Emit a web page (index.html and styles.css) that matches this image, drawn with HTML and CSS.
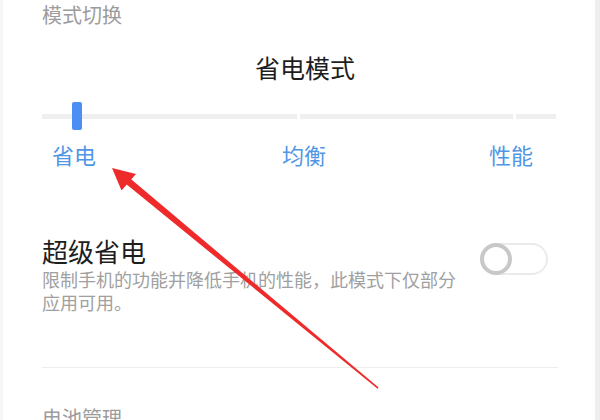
FILE: index.html
```html
<!DOCTYPE html>
<html lang="zh-CN">
<head>
<meta charset="utf-8">
<title>模式切换</title>
<link rel="stylesheet" href="styles.css">
</head>
<body>
<div class="page">
  <div class="content">
    <div class="section-head">模式切换</div>
    <div class="mode-title">省电模式</div>
    <div class="slider">
      <div class="seg seg-a"></div>
      <div class="seg seg-b"></div>
      <div class="seg seg-c"></div>
      <div class="thumb"></div>
    </div>
    <div class="labels">
      <span class="lab lab-1">省电</span>
      <span class="lab lab-2">均衡</span>
      <span class="lab lab-3">性能</span>
    </div>
    <div class="row">
      <div class="row-text">
        <div class="row-title">超级省电</div>
        <div class="row-desc">限制手机的功能并降低手机的性能，此模式下仅部分应用可用。</div>
      </div>
      <div class="toggle"><div class="knob"></div></div>
    </div>
    <div class="divider"></div>
    <div class="section-head next">电池管理</div>
  </div>
  <div class="strip"></div>
  <svg class="arrow" width="600" height="420" viewBox="0 0 600 420">
    <polygon points="112,168 121.5,190.5 136,174" fill="#ef2a2a"/>
    <polygon points="125.5,183.6 129.9,178.3 378.6,387.6 377.6,388.8" fill="#ef2a2a"/>
  </svg>
</div>
</body>
</html>
```
FILE: styles.css
```css
html, body {
  margin: 0;
  padding: 0;
  background: #ffffff;
}
body {
  font-family: "Noto Sans CJK SC", "Noto Sans", sans-serif;
}
.page {
  position: relative;
  width: 600px;
  height: 420px;
  overflow: hidden;
  display: flex;
  background: #ffffff;
}
.content {
  flex: 1;
  border-left: 3px solid #f6f6f6;
  padding: 3px 37px 0 39px;
}
.strip {
  width: 5px;
  background: #eeeeee;
}
.section-head {
  font-size: 20px;
  line-height: 24px;
  color: #9c9c9c;
}
.section-head.next {
  margin-top: 38px;
}
.mode-title {
  margin-top: 25px;
  text-align: center;
  font-size: 25px;
  line-height: 30px;
  color: #1e1e1e;
  padding-left: 10px;
}
.slider {
  position: relative;
  margin-top: 20px;
  height: 28px;
  display: flex;
  align-items: center;
  gap: 3px;
}
.seg {
  height: 5px;
  background: #efefef;
}
.seg-a { width: 255px; }
.seg-b { width: 213px; }
.seg-c { width: 40px; }
.thumb {
  position: absolute;
  left: 30px;
  top: 0;
  width: 10px;
  height: 28px;
  border-radius: 2px;
  background: #4b8ff4;
}
.labels {
  margin-top: 11px;
  display: flex;
  font-size: 22px;
  line-height: 26px;
  color: #5096e6;
}
.lab-1 { margin-left: 10px; }
.lab-2 { margin-left: 186px; }
.lab-3 { margin-left: 163px; }
.row {
  margin-top: 68px;
  display: flex;
  justify-content: space-between;
  align-items: flex-start;
}
.row-text {
  width: 420px;
}
.row-title {
  font-size: 26px;
  line-height: 32px;
  color: #1e1e1e;
}
.row-desc {
  margin-top: 1px;
  font-size: 18px;
  line-height: 23px;
  color: #a0a0a0;
}
.toggle {
  position: relative;
  margin-top: 8px;
  margin-right: 10px;
  width: 68px;
  height: 32px;
  box-sizing: border-box;
  border: 2px solid #ebebeb;
  border-radius: 16px;
  background: #ffffff;
}
.knob {
  position: absolute;
  left: -2px;
  top: -2px;
  width: 32px;
  height: 32px;
  box-sizing: border-box;
  border: 4px solid #c8c8c8;
  border-radius: 50%;
  background: #ffffff;
}
.divider {
  margin-top: 53px;
  height: 1px;
  background: #eeeeee;
}
.arrow {
  position: absolute;
  left: 0;
  top: 0;
  pointer-events: none;
}
```
